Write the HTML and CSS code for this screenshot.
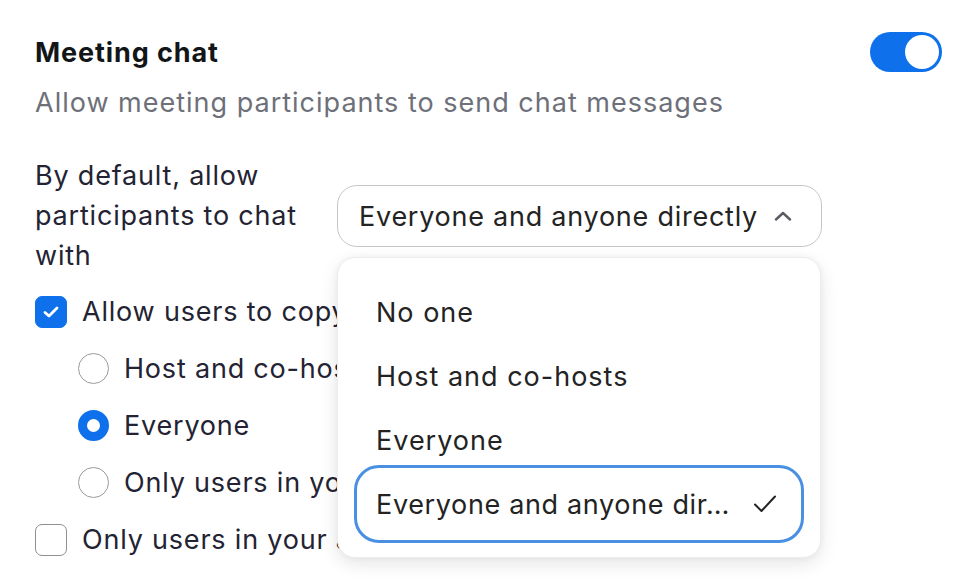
FILE: index.html
```html
<!DOCTYPE html>
<html>
<head>
<meta charset="utf-8">
<link rel="stylesheet" href="styles.css">
</head>
<body>
<div class="panel">
  <div class="header">
    <div class="title">Meeting chat</div>
    <div class="toggle"><div class="knob"></div></div>
  </div>
  <div class="desc">Allow meeting participants to send chat messages</div>
  <div class="setting">
    <div class="label">By default, allow participants to chat with</div>
    <div class="select-wrap">
      <div class="select">
        <span>Everyone and anyone directly</span>
        <svg class="chev" width="18" height="10" viewBox="0 0 18 10"><path d="M2 8.5 L9 2 L16 8.5" fill="none" stroke="#5b5b63" stroke-width="2.4" stroke-linecap="round" stroke-linejoin="round"/></svg>
      </div>
      <div class="menu">
        <div class="item">No one</div>
        <div class="item">Host and co-hosts</div>
        <div class="item">Everyone</div>
        <div class="item selected">
          <span class="trunc">Everyone and anyone dir…</span>
          <svg width="24" height="20" viewBox="0 0 24 20"><path d="M2 10.5 L8.5 17 L22 2.5" fill="none" stroke="#232323" stroke-width="2" stroke-linecap="round" stroke-linejoin="round"/></svg>
        </div>
      </div>
    </div>
  </div>
  <div class="list">
    <div class="row">
      <div class="cb checked"><svg width="18" height="14" viewBox="0 0 18 14"><path d="M3 7.5 L7 11 L15 3" fill="none" stroke="#fff" stroke-width="2.8" stroke-linecap="round" stroke-linejoin="round"/></svg></div>
      <span>Allow users to copy and save chat</span>
    </div>
    <div class="row sub">
      <div class="radio"></div>
      <span>Host and co-hosts</span>
    </div>
    <div class="row sub">
      <div class="radio on"></div>
      <span>Everyone</span>
    </div>
    <div class="row sub">
      <div class="radio"></div>
      <span>Only users in your account</span>
    </div>
    <div class="row">
      <div class="cb"></div>
      <span>Only users in your account can chat</span>
    </div>
  </div>
</div>
</body>
</html>
```
FILE: styles.css
```css
html, body {
  margin: 0;
  padding: 0;
  background: #fff;
}
body {
  font-family: Inter, "Noto Sans", sans-serif;
  color: #232333;
  width: 978px;
  height: 588px;
  overflow: hidden;
  font-size: 27px;
  letter-spacing: 0.8px;
}
.panel {
  padding: 32px 36px 0 35px;
}
.header {
  display: flex;
  justify-content: space-between;
  align-items: center;
  height: 40px;
}
.title {
  font-size: 27px;
  font-weight: 700;
  color: #131619;
  letter-spacing: 0.9px;
}
.toggle {
  width: 72px;
  height: 40px;
  border-radius: 20px;
  background: #0e71eb;
  display: flex;
  align-items: center;
  justify-content: flex-end;
  padding-right: 3px;
  box-sizing: border-box;
}
.knob {
  width: 34px;
  height: 34px;
  border-radius: 50%;
  background: #fff;
}
.desc {
  margin-top: 15px;
  line-height: 32px;
  color: #6e7079;
  letter-spacing: 1px;
}
.setting {
  margin-top: 37px;
  display: flex;
  align-items: center;
}
.label {
  width: 302px;
  line-height: 40px;
  padding-right: 2px;
  box-sizing: border-box;
}
.select-wrap {
  position: relative;
}
.select {
  width: 485px;
  height: 62px;
  box-sizing: border-box;
  border: 1.5px solid #c6c6cb;
  border-radius: 20px;
  display: flex;
  align-items: center;
  justify-content: space-between;
  padding: 0 29px 0 21px;
  color: #232323;
  background: #fff;
  letter-spacing: 0.75px;
}
.menu {
  position: absolute;
  left: 0;
  top: 72px;
  width: 484px;
  box-sizing: border-box;
  background: #fff;
  border: 1px solid #ececee;
  border-radius: 18px;
  box-shadow: 0 6px 18px rgba(0,0,0,0.10), 0 0 6px rgba(0,0,0,0.04);
  padding: 22px 23px 21px 23px;
  z-index: 5;
}
.item {
  height: 64px;
  display: flex;
  align-items: center;
  justify-content: space-between;
  padding: 0 20px 0 15px;
  color: #232323;
  border-radius: 18px;
  white-space: nowrap;
  letter-spacing: 1px;
}
.item .trunc {
  letter-spacing: 0.65px;
}
.item.selected {
  outline: 3px solid #4a90e2;
  outline-offset: 4px;
  border-radius: 18px;
}
.list {
  margin-top: 7px;
}
.row {
  height: 57px;
  display: flex;
  align-items: center;
  white-space: nowrap;
}
.row.sub {
  padding-left: 43px;
}
.row span {
  margin-left: 15px;
}
.cb {
  width: 32px;
  height: 32px;
  box-sizing: border-box;
  border-radius: 7px;
  border: 1.5px solid #8e8e95;
  flex: none;
  display: flex;
  align-items: center;
  justify-content: center;
}
.cb.checked {
  background: #0e71eb;
  border-color: #0e71eb;
}
.radio {
  width: 31px;
  height: 31px;
  box-sizing: border-box;
  border-radius: 50%;
  border: 1.5px solid #9a9aa0;
  flex: none;
}
.radio.on {
  border: 9px solid #0e71eb;
}
```
